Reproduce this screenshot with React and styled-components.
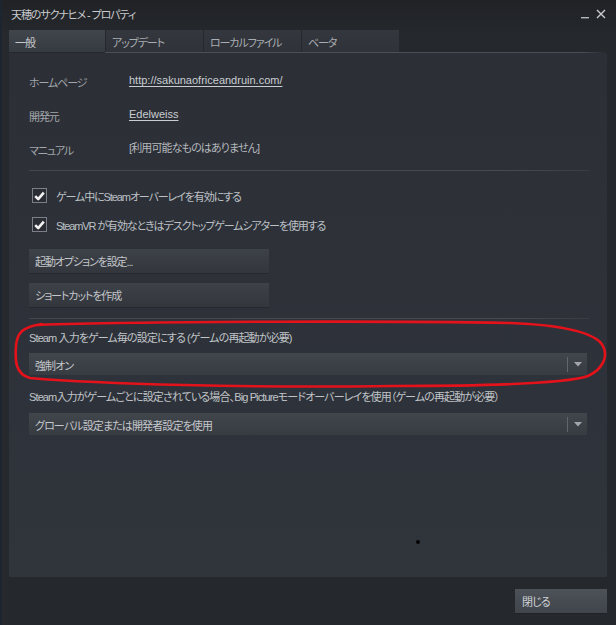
import React from 'react'
import styled, { createGlobalStyle } from 'styled-components'

const Global = createGlobalStyle`
  html, body {
    margin: 0;
    padding: 0;
    background: #24272c;
  }
  * { box-sizing: border-box; }
`

const Window = styled.div`
  position: relative;
  width: 616px;
  height: 625px;
  display: flex;
  flex-direction: column;
  background: #25282d;
  border-left: 2px solid #1c2530;
  font-family: "Liberation Sans", "Noto Sans CJK JP", sans-serif;
  font-size: 11px;
  font-feature-settings: "palt";
  letter-spacing: -0.08em;
  color: #b9bdc2;
  overflow: hidden;
`

const TitleBar = styled.div`
  height: 30px;
  display: flex;
  align-items: center;
  padding: 0 10px 2px 9px;
  background: linear-gradient(#202226, #24272b);
`

const Title = styled.div`
  flex: 1;
  color: #c9cbce;
  font-size: 11px;
  letter-spacing: -0.1em;
`

const Controls = styled.div`
  display: flex;
  align-items: flex-end;
  gap: 7px;
  height: 10px;
`

const TabRow = styled.div`
  display: flex;
  height: 23px;
  margin-left: 7px;
  margin-right: 11px;
  border-bottom: 1px solid #4a4e55;
  border-image: linear-gradient(to right, transparent 0, transparent 97px, #4b4f56 97px, #4b4f56 96%, transparent) 1;
`

const Tab = styled.div`
  width: ${p => (p.$active ? 96 : 97)}px;
  margin-right: 1px;
  padding: 4px 0 0 6px;
  font-size: 11px;
  letter-spacing: -0.1em;
  color: ${p => (p.$active ? '#c4c7cb' : '#a9adb2')};
  background: ${p => (p.$active
    ? 'linear-gradient(#41454c, #363a41)'
    : 'linear-gradient(#34383e, #2f3238)')};
`

const Panel = styled.div`
  position: relative;
  flex: 1;
  margin: 0 9px 0 7px;
  padding: 19px 20px 0 20px;
  background: linear-gradient(#2c2f36, #2e323a 70%, #30343b);
  display: flex;
  flex-direction: column;
`

const InfoList = styled.div`
  display: flex;
  flex-direction: column;
  gap: 15px;
`

const InfoRow = styled.div`
  display: flex;
  line-height: 16px;
`

const InfoLabel = styled.div`
  width: 100px;
  padding-top: 3px;
  color: #a2a6ab;
  letter-spacing: -0.1em;
`

const InfoValue = styled.div`
  color: ${p => (p.$link ? '#c9cdd2' : '#b4b8bd')};
  text-decoration: ${p => (p.$link ? 'underline' : 'none')};
  text-underline-offset: 2px;
  letter-spacing: ${p => (p.$link ? '0' : '-0.08em')};
`

const Divider = styled.div`
  height: 1px;
  margin: ${p => p.$m};
  width: 560px;
  background: linear-gradient(to right, #43474e, #474b52 85%, #393c43);
`

const CheckList = styled.div`
  display: flex;
  flex-direction: column;
  gap: 14px;
  padding-left: 3px;
`

const CheckRow = styled.label`
  display: flex;
  align-items: center;
  gap: 9px;
  height: 15px;
  font-size: 11px;
  letter-spacing: -0.1em;
  color: #bcc0c5;
`

const Box = styled.span`
  width: 15px;
  height: 15px;
  border: 1px solid #7c8086;
  background: #2a2d33;
  display: flex;
  align-items: center;
  justify-content: center;
`

const ButtonList = styled.div`
  display: flex;
  flex-direction: column;
  gap: 10px;
  margin-top: 17px;
`

const Button = styled.div`
  width: ${p => p.$w}px;
  height: 24px;
  display: flex;
  align-items: center;
  padding-left: 6px;
  color: #c3c6ca;
  letter-spacing: -0.1em;
  background: linear-gradient(#3d4148, #33373d);
  box-shadow: 0 1px 0 #25282d;
`

const SectionLabel = styled.div`
  line-height: 16px;
  margin-top: ${p => p.$mt}px;
  color: #c0c4c8;
`

const Select = styled.div`
  height: 22px;
  margin-top: ${p => p.$mt}px;
  width: 558px;
  display: flex;
  align-items: center;
  background: linear-gradient(#41454c, #373b42);
  color: #c4c7cb;
`

const SelectText = styled.div`
  flex: 1;
  padding-left: 6px;
  padding-top: 2px;
`

const SelectArrow = styled.div`
  width: 20px;
  height: 15px;
  border-left: 1px solid #62666c;
  display: flex;
  align-items: center;
  justify-content: center;
`

const Dot = styled.div`
  position: absolute;
  left: 407px;
  top: 487px;
  width: 4px;
  height: 4px;
  border-radius: 50%;
  background: #050505;
`

const Footer = styled.div`
  height: 48px;
  display: flex;
  justify-content: flex-end;
  align-items: flex-start;
  padding: 12px 9px 0 0;
`

const CloseButton = styled.div`
  width: 92px;
  height: 24px;
  display: flex;
  align-items: center;
  padding-left: 7px;
  color: #cfd2d6;
  background: linear-gradient(#4d5158, #40444b);
  box-shadow: 0 1px 0 #1f2226;
`

const Annotation = styled.svg`
  position: absolute;
  left: -2px;
  top: 0;
  pointer-events: none;
`

function Check() {
  return (
    <svg width="11" height="10" viewBox="0 0 11 10">
      <path d="M1.2 5.2 L4.2 8.2 L9.8 1.6" fill="none" stroke="#f2f2f2" strokeWidth="2.6" strokeLinejoin="round" />
    </svg>
  )
}

function Arrow() {
  return (
    <svg width="8" height="5" viewBox="0 0 8 5">
      <path d="M0 0 H8 L4 4.5 Z" fill="#a2a6ab" />
    </svg>
  )
}

export default function App() {
  return (
    <>
      <Global />
      <Window>
        <TitleBar>
          <Title>天穂のサクナヒメ - プロパティ</Title>
          <Controls>
            <svg width="8" height="3" viewBox="0 0 8 3">
              <rect x="0" y="1" width="8" height="1.4" fill="#b5b8bc" />
            </svg>
            <svg width="10" height="10" viewBox="0 0 10 10">
              <path d="M1 1 L9 9 M9 1 L1 9" stroke="#c9cbce" strokeWidth="1.4" />
            </svg>
          </Controls>
        </TitleBar>

        <TabRow>
          <Tab $active>一般</Tab>
          <Tab>アップデート</Tab>
          <Tab>ローカルファイル</Tab>
          <Tab>ベータ</Tab>
        </TabRow>

        <Panel>
          <InfoList>
            <InfoRow>
              <InfoLabel>ホームページ</InfoLabel>
              <InfoValue $link>http://sakunaofriceandruin.com/</InfoValue>
            </InfoRow>
            <InfoRow>
              <InfoLabel>開発元</InfoLabel>
              <InfoValue $link>Edelweiss</InfoValue>
            </InfoRow>
            <InfoRow>
              <InfoLabel>マニュアル</InfoLabel>
              <InfoValue>[利用可能なものはありません]</InfoValue>
            </InfoRow>
          </InfoList>

          <Divider $m="11px 0 17px 0" />

          <CheckList>
            <CheckRow>
              <Box><Check /></Box>
              ゲーム中にSteamオーバーレイを有効にする
            </CheckRow>
            <CheckRow>
              <Box><Check /></Box>
              SteamVR が有効なときはデスクトップゲームシアターを使用する
            </CheckRow>
          </CheckList>

          <ButtonList>
            <Button $w={240}>起動オプションを設定...</Button>
            <Button $w={240}>ショートカットを作成</Button>
          </ButtonList>

          <Divider $m="11px 0 0 0" />

          <SectionLabel $mt={11}>Steam 入力をゲーム毎の設定にする (ゲームの再起動が必要)</SectionLabel>
          <Select $mt={7}>
            <SelectText>強制オン</SelectText>
            <SelectArrow><Arrow /></SelectArrow>
          </Select>

          <SectionLabel $mt={14}>Steam入力がゲームごとに設定されている場合、Big Pictureモードオーバーレイを使用（ゲームの再起動が必要）</SectionLabel>
          <Select $mt={8}>
            <SelectText>グローバル設定または開発者設定を使用</SelectText>
            <SelectArrow><Arrow /></SelectArrow>
          </Select>

          <Dot />
        </Panel>

        <Footer>
          <CloseButton>閉じる</CloseButton>
        </Footer>

        <Annotation width="616" height="625" viewBox="0 0 616 625">
          <path
            d="M38 325 C150 321, 400 321, 511 323 C560 325, 590 331, 601 343 C610 355, 603 369, 588 376 C560 385, 470 386, 393 386 C250 388, 100 384, 30 378 C15 374, 15 360, 16 346 C17 333, 22 327, 42 324"
            fill="none"
            stroke="#e3121b"
            strokeWidth="2.6"
            strokeLinecap="round"
          />
        </Annotation>
      </Window>
    </>
  )
}
